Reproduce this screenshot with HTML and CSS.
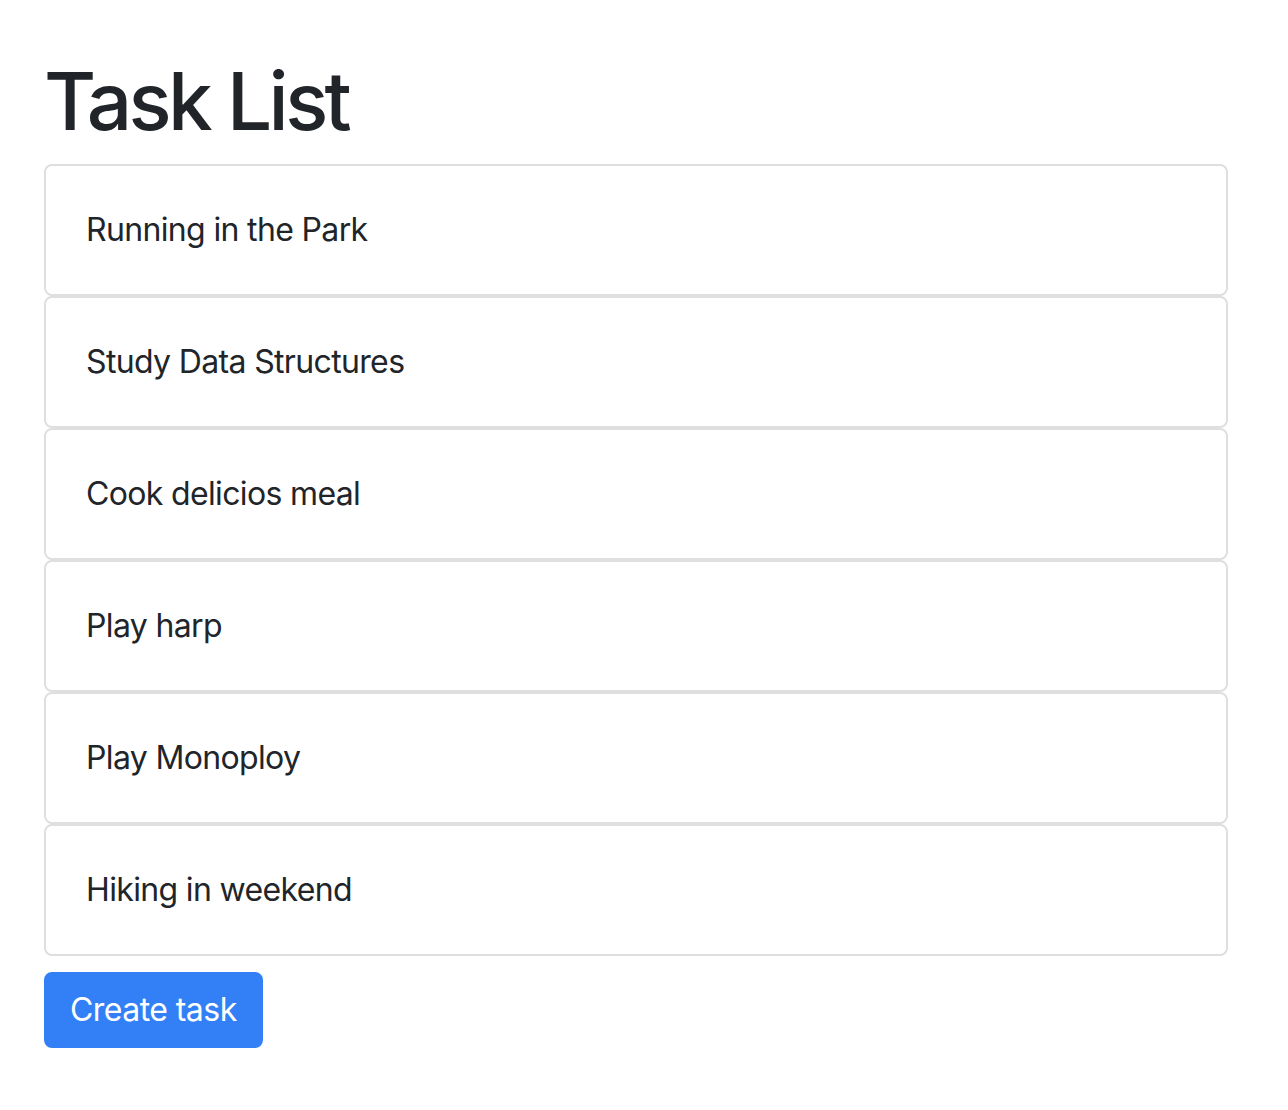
FILE: index.html
```html
<!DOCTYPE html>
<html lang="en">
<head>
<meta charset="utf-8">
<title>Task List</title>
<link rel="stylesheet" href="styles.css">
</head>
<body>
<div class="container">
  <h1 class="title">Task List</h1>
  <div class="task-list">
    <div class="card"><div class="card-body">Running in the Park</div></div>
    <div class="card"><div class="card-body">Study Data Structures</div></div>
    <div class="card"><div class="card-body">Cook delicios meal</div></div>
    <div class="card"><div class="card-body">Play harp</div></div>
    <div class="card"><div class="card-body">Play Monoploy</div></div>
    <div class="card"><div class="card-body">Hiking in weekend</div></div>
  </div>
  <button class="btn-primary" type="button">Create task</button>
</div>
</body>
</html>
```

FILE: styles.css
```css
* { box-sizing: border-box; }
html, body { margin: 0; padding: 0; background: #fff; }
body {
  font-family: Inter, "Noto Sans", "Liberation Sans", sans-serif;
  font-size: 32px;
  line-height: 1.5;
  color: #212529;
  letter-spacing: -0.65px;
}
.container {
  width: 1184px;
  margin-left: 44px;
  padding-top: 53px;
}
.title {
  font-size: 80px;
  font-weight: 500;
  line-height: 1.2;
  letter-spacing: -3.6px;
  margin: 0 0 15px;
}
.task-list {
  display: flex;
  flex-direction: column;
}
.card {
  border: 2px solid #dfdfdf;
  border-radius: 8px;
  background: #fff;
}
.card-body {
  padding: 40px;
}
.btn-primary {
  margin-top: 16px;
  font-family: inherit;
  font-size: 32px;
  line-height: 48px;
  letter-spacing: -0.55px;
  padding: 12px 24px;
  border: 2px solid #3380f6;
  background: #3380f6;
  color: #fff;
  border-radius: 8px;
}
```
